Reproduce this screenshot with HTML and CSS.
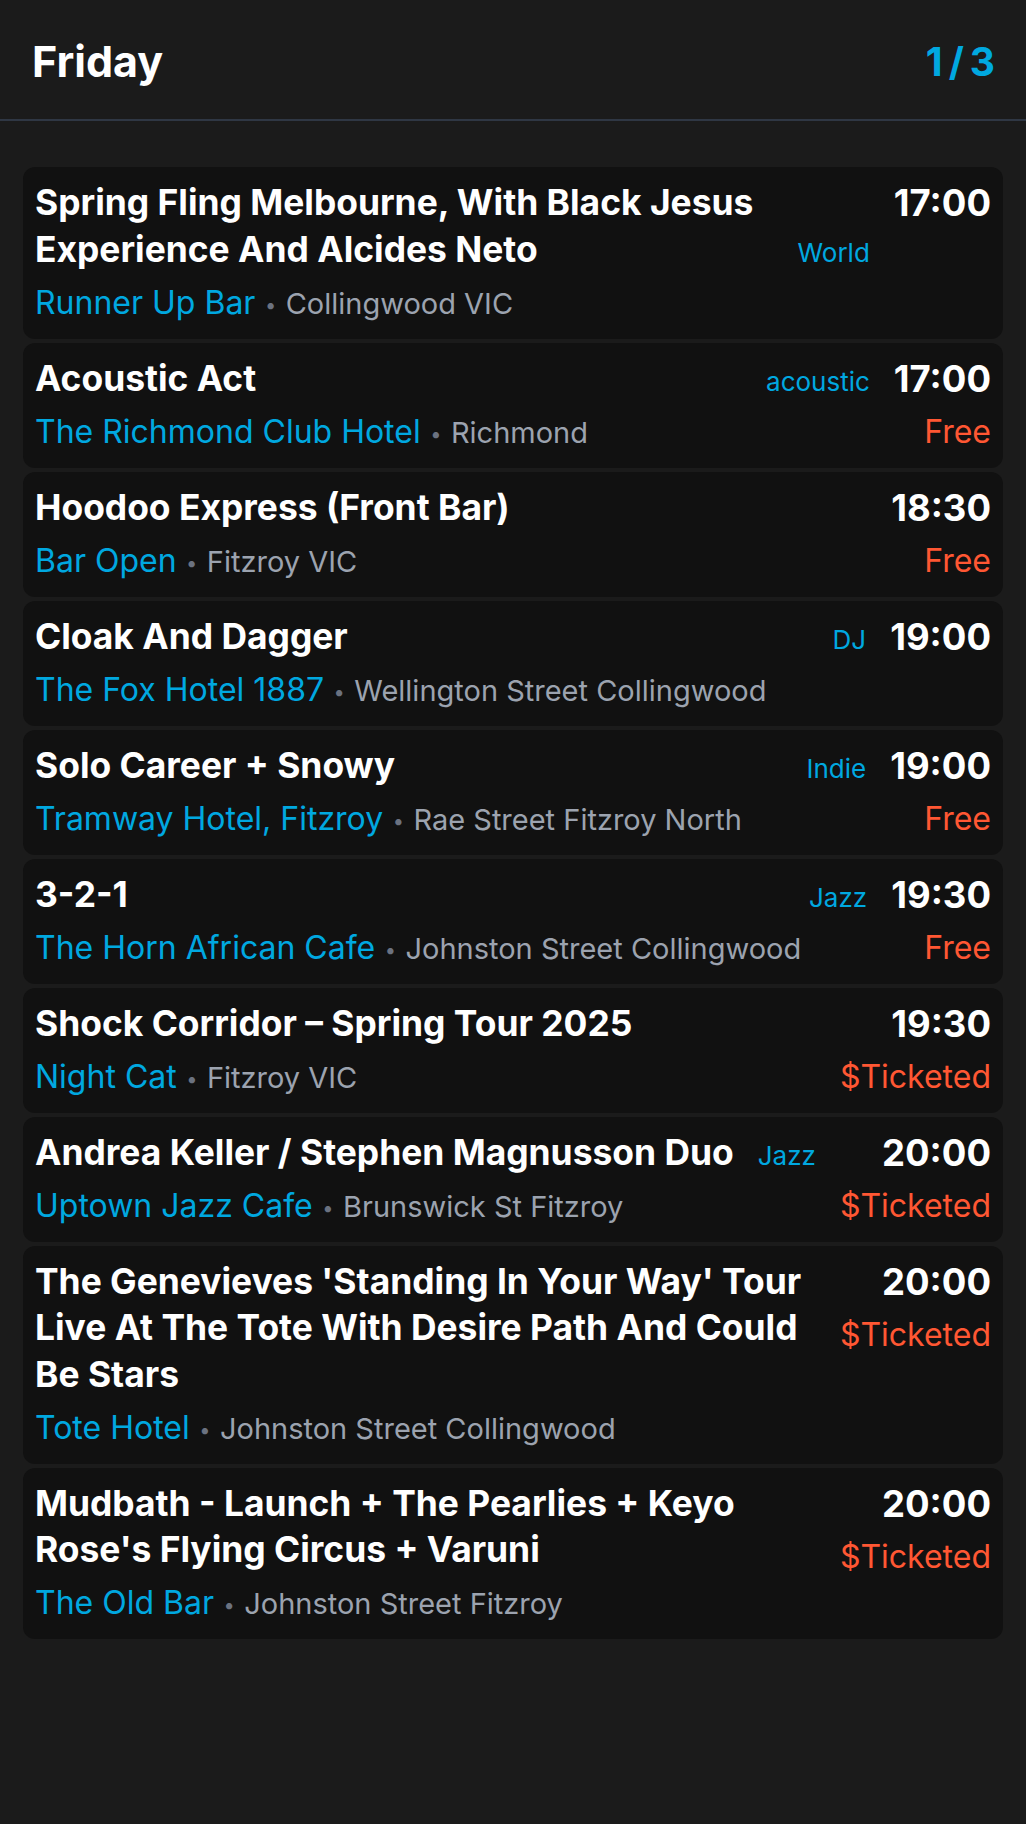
FILE: index.html
```html
<!DOCTYPE html>
<html lang="en">
<head>
<meta charset="utf-8">
<title>Friday</title>
<link rel="stylesheet" href="styles.css">
</head>
<body>
<header class="topbar">
  <h1 class="day">Friday</h1>
  <div class="pager">1/3</div>
</header>
<main class="list">
  <div class="card">
    <div class="main">
      <div class="head"><span class="title">Spring Fling Melbourne, With Black Jesus Experience And Alcides Neto</span><span class="tag">World</span></div>
      <div class="venue"><span class="vname">Runner Up Bar</span><span class="dot">•</span><span class="loc">Collingwood VIC</span></div>
    </div>
    <div class="side"><div class="time">17:00</div></div>
  </div>
  <div class="card">
    <div class="main">
      <div class="head"><span class="title">Acoustic Act</span><span class="tag">acoustic</span></div>
      <div class="venue"><span class="vname">The Richmond Club Hotel</span><span class="dot">•</span><span class="loc">Richmond</span></div>
    </div>
    <div class="side"><div class="time">17:00</div><div class="price">Free</div></div>
  </div>
  <div class="card">
    <div class="main">
      <div class="head"><span class="title">Hoodoo Express (Front Bar)</span></div>
      <div class="venue"><span class="vname">Bar Open</span><span class="dot">•</span><span class="loc">Fitzroy VIC</span></div>
    </div>
    <div class="side"><div class="time">18:30</div><div class="price">Free</div></div>
  </div>
  <div class="card">
    <div class="main">
      <div class="head"><span class="title">Cloak And Dagger</span><span class="tag">DJ</span></div>
      <div class="venue"><span class="vname">The Fox Hotel 1887</span><span class="dot">•</span><span class="loc">Wellington Street Collingwood</span></div>
    </div>
    <div class="side"><div class="time">19:00</div></div>
  </div>
  <div class="card">
    <div class="main">
      <div class="head"><span class="title">Solo Career + Snowy</span><span class="tag">Indie</span></div>
      <div class="venue"><span class="vname">Tramway Hotel, Fitzroy</span><span class="dot">•</span><span class="loc">Rae Street Fitzroy North</span></div>
    </div>
    <div class="side"><div class="time">19:00</div><div class="price">Free</div></div>
  </div>
  <div class="card">
    <div class="main">
      <div class="head"><span class="title">3-2-1</span><span class="tag">Jazz</span></div>
      <div class="venue"><span class="vname">The Horn African Cafe</span><span class="dot">•</span><span class="loc">Johnston Street Collingwood</span></div>
    </div>
    <div class="side"><div class="time">19:30</div><div class="price">Free</div></div>
  </div>
  <div class="card">
    <div class="main">
      <div class="head"><span class="title">Shock Corridor – Spring Tour 2025</span></div>
      <div class="venue"><span class="vname">Night Cat</span><span class="dot">•</span><span class="loc">Fitzroy VIC</span></div>
    </div>
    <div class="side"><div class="time">19:30</div><div class="price">$Ticketed</div></div>
  </div>
  <div class="card">
    <div class="main">
      <div class="head"><span class="title">Andrea Keller / Stephen Magnusson Duo</span><span class="tag">Jazz</span></div>
      <div class="venue"><span class="vname">Uptown Jazz Cafe</span><span class="dot">•</span><span class="loc">Brunswick St Fitzroy</span></div>
    </div>
    <div class="side"><div class="time">20:00</div><div class="price">$Ticketed</div></div>
  </div>
  <div class="card">
    <div class="main">
      <div class="head"><span class="title">The Genevieves 'Standing In Your Way' Tour Live At The Tote With Desire Path And Could Be Stars</span></div>
      <div class="venue"><span class="vname">Tote Hotel</span><span class="dot">•</span><span class="loc">Johnston Street Collingwood</span></div>
    </div>
    <div class="side"><div class="time">20:00</div><div class="price">$Ticketed</div></div>
  </div>
  <div class="card">
    <div class="main">
      <div class="head"><span class="title">Mudbath - Launch + The Pearlies + Keyo Rose's Flying Circus + Varuni</span></div>
      <div class="venue"><span class="vname">The Old Bar</span><span class="dot">•</span><span class="loc">Johnston Street Fitzroy</span></div>
    </div>
    <div class="side"><div class="time">20:00</div><div class="price">$Ticketed</div></div>
  </div>
</main>
</body>
</html>
```
FILE: styles.css
```css
html, body {
  margin: 0;
  padding: 0;
  background: #1b1b1b;
}
body {
  font-family: "Inter", "Noto Sans", "Liberation Sans", sans-serif;
  color: #ffffff;
  min-height: 1824px;
}
.topbar {
  display: flex;
  align-items: center;
  justify-content: space-between;
  padding: 35px 31px 31px 32px;
  border-bottom: 2px solid #2f3744;
}
.day {
  margin: 0;
  font-size: 43px;
  line-height: 53px;
  font-weight: 700;
  color: #ffffff;
}
.pager {
  font-size: 39px;
  line-height: 53px;
  font-weight: 700;
  color: #00a8e0;
  letter-spacing: 6px;
  margin-right: -6px;
}
.list {
  padding: 46px 23px 0;
}
.card {
  display: flex;
  gap: 24px;
  background: #111111;
  border-radius: 12px;
  padding: 13px 12px 13px;
  margin-bottom: 4px;
}
.main {
  flex: 1;
  min-width: 0;
}
.head {
  display: flex;
  align-items: last baseline;
  gap: 12px;
}
.title {
  flex: 1;
  min-width: 0;
  font-size: 35.4px;
  line-height: 46.5px;
  font-weight: 700;
}
.tag {
  flex-shrink: 0;
  font-size: 26px;
  line-height: 30px;
  color: #00a8e0;
}
.venue {
  margin-top: 7.5px;
  font-size: 32px;
  line-height: 44px;
  white-space: nowrap;
}
.vname {
  color: #00a8e0;
}
.dot {
  color: #6b7280;
  font-size: 20px;
  line-height: 0;
  margin: 0 9.5px;
  position: relative;
  top: -2px;
}
.loc {
  color: #9ca3af;
  font-size: 29px;
}
.side {
  flex-shrink: 0;
  text-align: right;
}
.time {
  font-size: 36.5px;
  line-height: 46.5px;
  font-weight: 700;
}
.price {
  margin-top: 7.5px;
  font-size: 32px;
  line-height: 44px;
  color: #ff5733;
}
```
